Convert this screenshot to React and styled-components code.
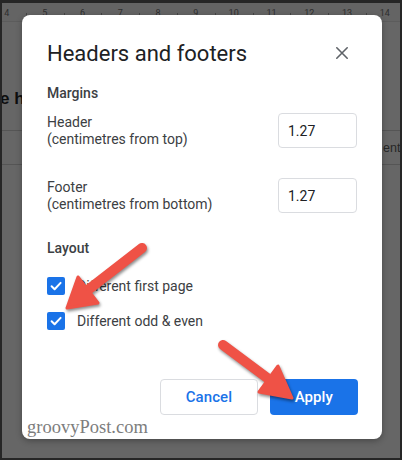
import React from "react";
import styled, { createGlobalStyle } from "styled-components";

const Global = createGlobalStyle`
  html, body { margin: 0; padding: 0; background: #2a2a2a; }
  * { box-sizing: border-box; }
`;

const Page = styled.div`
  position: relative;
  width: 402px;
  height: 460px;
  overflow: hidden;
  background: #666666;
  border: 2px solid #262626;
  border-top-width: 3px;
  font-family: Roboto, "Noto Sans", Arial, sans-serif;
`;

const Ruler = styled.div`
  display: flex;
  height: 19px;
  margin-left: -14px;
  background: #646464;
  border-bottom: 1px solid #5c5c5c;
  align-items: center;
`;

const RulerCell = styled.span`
  position: relative;
  flex: 0 0 37.8px;
  text-align: center;
  font-size: 9px;
  line-height: 10px;
  padding-top: 2px;
  color: #2e2e2e;
  &::after {
    content: "";
    position: absolute;
    right: -1px;
    top: 7px;
    width: 1px;
    height: 3px;
    background: #444;
  }
`;

const DocHeading = styled.div`
  margin: 67px 0 0 -2px;
  font-family: "Liberation Sans", Arial, sans-serif;
  font-weight: 700;
  font-size: 17px;
  line-height: 20px;
  color: #0e0e0e;
  white-space: nowrap;
`;

const DocTableRow = styled.div`
  display: flex;
  justify-content: flex-start;
  align-items: center;
  height: 35px;
  margin-top: 21px;
  border-top: 1px solid #555;
  border-bottom: 1px solid #555;
  padding-left: 381px;
  font-family: "Liberation Sans", Arial, sans-serif;
  font-size: 12.5px;
  color: #262626;
  white-space: nowrap;
`;

const Dialog = styled.div`
  position: absolute;
  left: 20px;
  top: 12px;
  width: 360px;
  height: 424px;
  background: #ffffff;
  border-radius: 8px;
  box-shadow: 0 2px 6px rgba(0, 0, 0, 0.3);
  padding: 25px 24px 24px 25px;
  display: flex;
  flex-direction: column;
`;

const TitleRow = styled.div`
  display: flex;
  align-items: center;
  justify-content: space-between;
  height: 28px;
`;

const Title = styled.h1`
  margin: 0;
  font-size: 22px;
  line-height: 28px;
  font-weight: 400;
  color: #202124;
  letter-spacing: 0;
`;

const CloseButton = styled.button`
  width: 24px;
  height: 24px;
  margin: -2px 4px 0 0;
  padding: 0;
  border: none;
  background: none;
  display: flex;
  align-items: center;
  justify-content: center;
`;

const SectionTitle = styled.div`
  margin-top: ${(p) => p.$mt}px;
  font-size: 14px;
  line-height: 20px;
  font-weight: 500;
  color: #3c4043;
`;

const FieldRow = styled.div`
  display: flex;
  align-items: center;
  justify-content: space-between;
  margin-top: ${(p) => p.$mt}px;
`;

const FieldLabel = styled.div`
  font-size: 14px;
  line-height: 16.5px;
  color: #3c4043;
`;

const NumberInput = styled.div`
  width: 79px;
  height: 35px;
  margin-right: 1px;
  border: 1px solid #dadce0;
  border-radius: 4px;
  padding-left: 9px;
  display: flex;
  align-items: center;
  font-size: 14px;
  color: #202124;
`;

const CheckList = styled.div`
  margin-top: 10px;
  display: flex;
  flex-direction: column;
`;

const CheckRow = styled.label`
  display: flex;
  align-items: center;
  height: 35.5px;
  gap: 12px;
  font-size: 14px;
  color: #3c4043;
`;

const CheckBox = styled.span`
  width: 18px;
  height: 18px;
  border-radius: 2px;
  background: #1a73e8;
  display: flex;
  align-items: center;
  justify-content: center;
`;

const Actions = styled.div`
  margin-top: auto;
  display: flex;
  justify-content: flex-end;
  gap: 12px;
`;

const Button = styled.button`
  height: 36px;
  padding: 0 ${(p) => (p.$primary ? 25 : 24.5)}px;
  border-radius: 4px;
  font-family: Roboto, "Noto Sans", Arial, sans-serif;
  font-size: 15px;
  font-weight: 500;
  letter-spacing: 0.1px;
  border: ${(p) => (p.$primary ? "none" : "1px solid #dadce0")};
  background: ${(p) => (p.$primary ? "#1a73e8" : "#ffffff")};
  color: ${(p) => (p.$primary ? "#ffffff" : "#1a73e8")};
`;

const Watermark = styled.div`
  position: absolute;
  left: 5px;
  bottom: 1px;
  font-family: "Liberation Serif", "Times New Roman", serif;
  font-size: 18.5px;
  line-height: 22px;
  color: #7d7d7d;
`;

const ArrowLayer = styled.svg`
  position: absolute;
  left: -2px;
  top: -3px;
  width: 402px;
  height: 460px;
  pointer-events: none;
  filter: drop-shadow(1px 2px 1.5px rgba(0, 0, 0, 0.45));
`;

const Check = () => (
  <svg width="14" height="14" viewBox="0 0 14 14">
    <path d="M2.6 7.3 L5.6 10.2 L11.6 3.9" fill="none" stroke="#fff" strokeWidth="2" strokeLinecap="round" strokeLinejoin="round" />
  </svg>
);

const rulerNums = ["4", "5", "6", "7", "8", "9", "10", "11", "12", "13", "14"];

export default function App() {
  return (
    <>
      <Global />
      <Page>
        <Ruler>
          {rulerNums.map((n) => (
            <RulerCell key={n}>{n}</RulerCell>
          ))}
        </Ruler>
        <DocHeading>e he</DocHeading>
        <DocTableRow>ent</DocTableRow>

        <Dialog>
          <TitleRow>
            <Title>Headers and footers</Title>
            <CloseButton aria-label="Close">
              <svg width="24" height="24" viewBox="0 0 24 24">
                <path d="M6.8 6.8 L17.2 17.2 M17.2 6.8 L6.8 17.2" stroke="#5f6368" strokeWidth="1.6" strokeLinecap="round" />
              </svg>
            </CloseButton>
          </TitleRow>

          <SectionTitle $mt={15}>Margins</SectionTitle>
          <FieldRow $mt={10}>
            <FieldLabel>
              Header
              <br />
              (centimetres from top)
            </FieldLabel>
            <NumberInput>1.27</NumberInput>
          </FieldRow>
          <FieldRow $mt={30}>
            <FieldLabel>
              Footer
              <br />
              (centimetres from bottom)
            </FieldLabel>
            <NumberInput>1.27</NumberInput>
          </FieldRow>

          <SectionTitle $mt={25}>Layout</SectionTitle>
          <CheckList>
            <CheckRow>
              <CheckBox>
                <Check />
              </CheckBox>
              Different first page
            </CheckRow>
            <CheckRow>
              <CheckBox>
                <Check />
              </CheckBox>
              Different odd &amp; even
            </CheckRow>
          </CheckList>

          <Actions>
            <Button>Cancel</Button>
            <Button $primary>Apply</Button>
          </Actions>
          <Watermark>groovyPost.com</Watermark>
        </Dialog>

        <ArrowLayer viewBox="0 0 402 460">
          <g fill="#ef5246" stroke="#ef5246" strokeLinejoin="round" strokeLinecap="round">
            <line x1="142" y1="248" x2="84" y2="293" strokeWidth="10" />
            <polygon points="67,308 78,277 98,303" strokeWidth="3" />
            <line x1="223" y1="345" x2="270" y2="380" strokeWidth="10" />
            <polygon points="292,398 278,366 259,392" strokeWidth="3" />
          </g>
        </ArrowLayer>
      </Page>
    </>
  );
}
